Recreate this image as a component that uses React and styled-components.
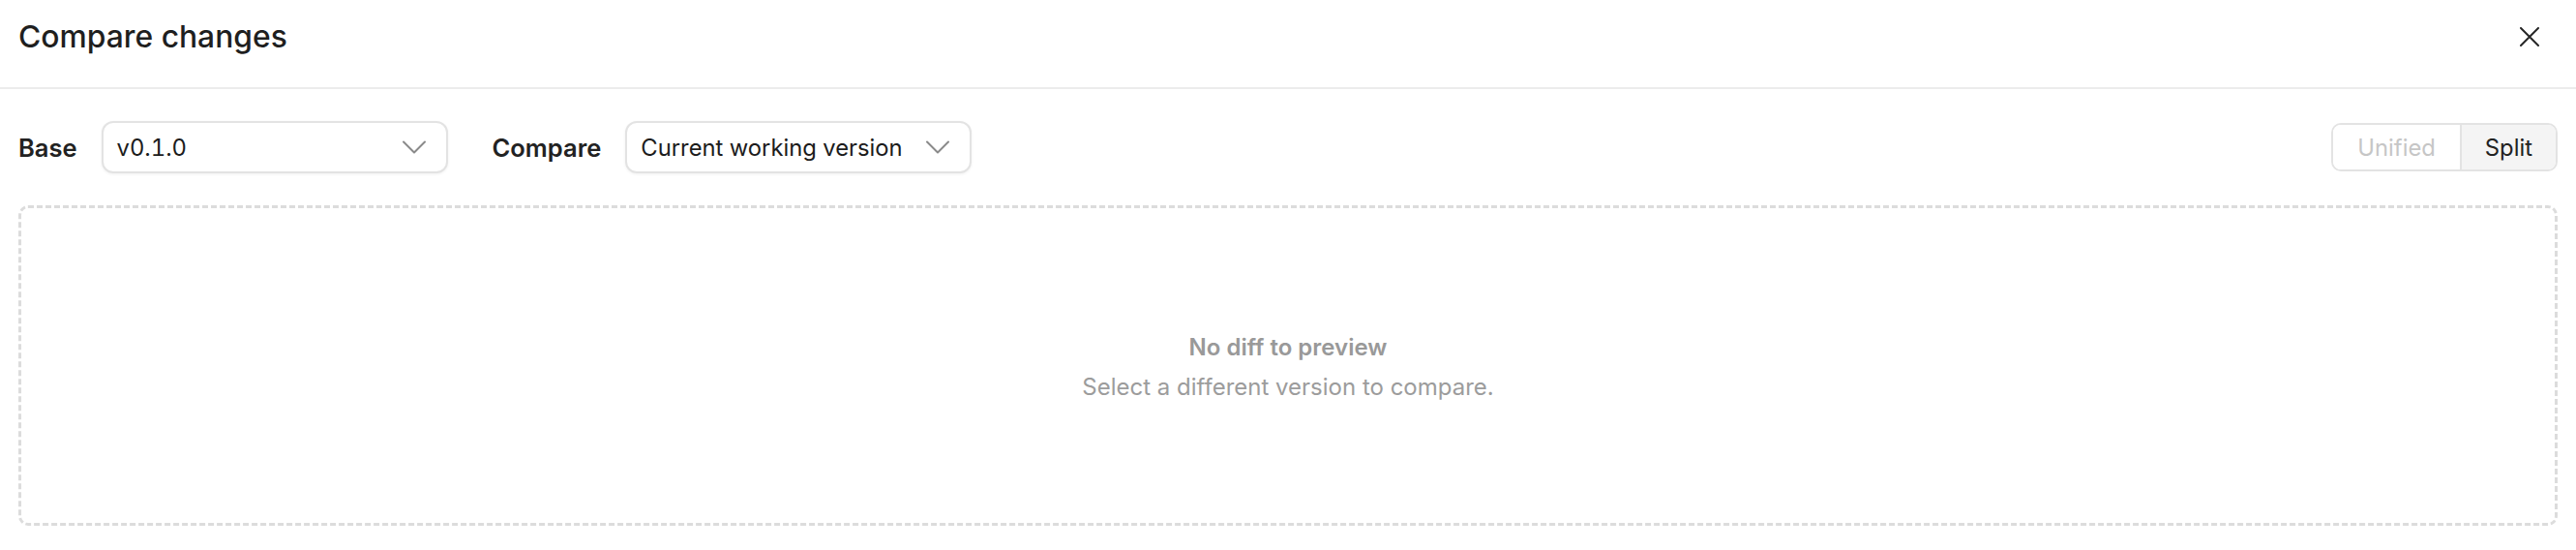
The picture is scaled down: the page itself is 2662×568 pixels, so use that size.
import React from "react";
import styled, { createGlobalStyle } from "styled-components";

const GlobalStyle = createGlobalStyle`
  html, body {
    margin: 0;
    padding: 0;
    background: #ffffff;
  }
  body {
    font-family: Inter, "Noto Sans", "Liberation Sans", sans-serif;
    color: #1f1f1f;
    -webkit-font-smoothing: antialiased;
  }
  * { box-sizing: border-box; }
`;

const Dialog = styled.div`
  width: 2662px;
  height: 568px;
  display: flex;
  flex-direction: column;
  background: #fff;
`;

const Header = styled.header`
  height: 92px;
  flex: none;
  display: flex;
  justify-content: space-between;
  align-items: flex-start;
  padding: 19px 38px 0 19px;
  border-bottom: 2px solid #ececec;
`;

const Title = styled.h1`
  margin: 0;
  font-size: 31.8px;
  line-height: 38px;
  font-weight: 500;
  color: #1f1f1f;
`;

const CloseButton = styled.button`
  width: 20px;
  height: 38px;
  padding: 0;
  border: none;
  background: transparent;
  display: flex;
  align-items: center;
  justify-content: center;
  color: #262626;
  cursor: pointer;
`;

const Toolbar = styled.div`
  display: flex;
  align-items: center;
  padding: 33px 19px 0 19px;
  flex: none;
`;

const Field = styled.div`
  display: flex;
  align-items: center;
  gap: 25px;
  margin-right: ${(p) => p.$spacing || 0}px;
`;

const Label = styled.span`
  font-size: 25.5px;
  font-weight: 600;
  color: #222;
`;

const Select = styled.div`
  width: 358px;
  height: 54px;
  display: flex;
  align-items: center;
  justify-content: space-between;
  padding: 0 21px 0 14px;
  border: 2px solid #e3e3e3;
  border-radius: 12px;
  background: #fff;
  box-shadow: 0 1px 3px rgba(0, 0, 0, 0.06);
  font-size: 23.8px;
  color: #1c1c1c;
  font-variant-numeric: tabular-nums;
`;

const Spacer = styled.div`
  flex: 1;
`;

const Toggle = styled.div`
  display: flex;
  height: 50px;
  border: 2px solid #e3e3e3;
  border-radius: 10px;
  overflow: hidden;
`;

const ToggleOption = styled.button`
  border: none;
  margin: 0;
  font-family: inherit;
  font-size: 23.8px;
  padding: 0 ${(p) => (p.$active ? 24 : 25)}px;
  background: ${(p) => (p.$active ? "#f4f4f4" : "#fff")};
  color: ${(p) => (p.$active ? "#222" : "#c6c6c6")};
  & + & {
    border-left: 2px solid #e3e3e3;
  }
`;

const EmptyBox = styled.div`
  margin: 33px 19px 25px 19px;
  flex: 1;
  padding-top: 4px;
  border: 3px dashed #dcdcdc;
  border-radius: 10px;
  display: flex;
  flex-direction: column;
  align-items: center;
  justify-content: center;
`;

const EmptyTitle = styled.div`
  font-size: 24px;
  line-height: 32px;
  font-weight: 600;
  color: #999;
`;

const EmptyText = styled.div`
  margin-top: 9px;
  font-size: 24px;
  line-height: 32px;
  color: #9c9c9c;
`;

const Chevron = () => (
  <svg width="24" height="14" viewBox="0 0 24 14" fill="none">
    <path d="M1 1.5 L12 12.5 L23 1.5" stroke="#8a8a8a" strokeWidth="2" strokeLinecap="round" strokeLinejoin="round" />
  </svg>
);

const CloseIcon = () => (
  <svg width="20" height="20" viewBox="0 0 20 20" fill="none">
    <path d="M1 1 L19 19 M19 1 L1 19" stroke="currentColor" strokeWidth="2" strokeLinecap="round" />
  </svg>
);

export default function App() {
  return (
    <>
      <GlobalStyle />
      <Dialog>
        <Header>
          <Title>Compare changes</Title>
          <CloseButton aria-label="Close">
            <CloseIcon />
          </CloseButton>
        </Header>
        <Toolbar>
          <Field $spacing={46}>
            <Label>Base</Label>
            <Select>
              <span>v0.1.0</span>
              <Chevron />
            </Select>
          </Field>
          <Field>
            <Label>Compare</Label>
            <Select>
              <span>Current working version</span>
              <Chevron />
            </Select>
          </Field>
          <Spacer />
          <Toggle>
            <ToggleOption>Unified</ToggleOption>
            <ToggleOption $active>Split</ToggleOption>
          </Toggle>
        </Toolbar>
        <EmptyBox>
          <EmptyTitle>No diff to preview</EmptyTitle>
          <EmptyText>Select a different version to compare.</EmptyText>
        </EmptyBox>
      </Dialog>
    </>
  );
}
